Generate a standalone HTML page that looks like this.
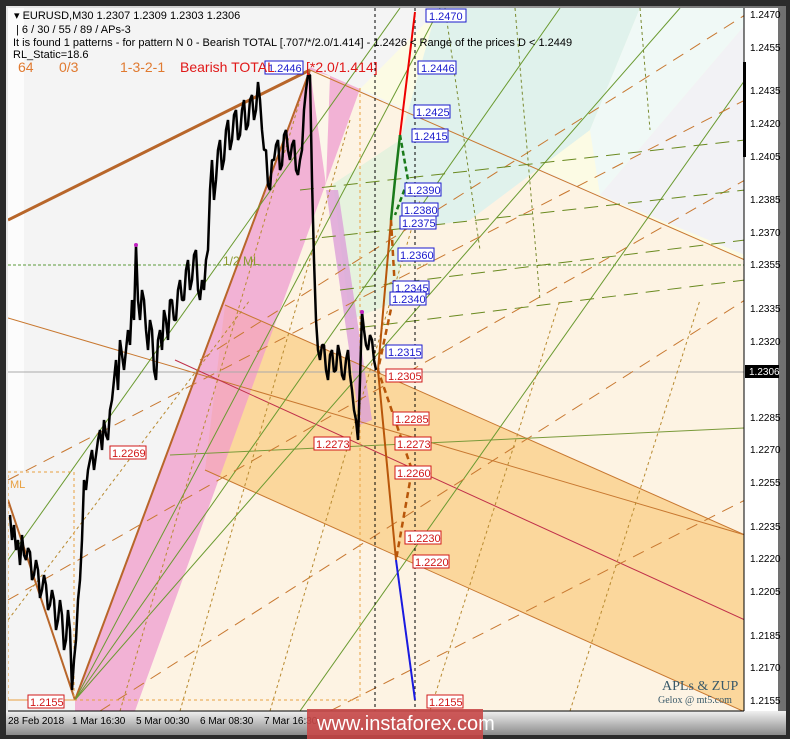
<!DOCTYPE html>
<html><head><meta charset="utf-8"><style>
body{margin:0;background:#2a2a2a;width:790px;height:739px;overflow:hidden;font-family:"Liberation Sans",sans-serif}
svg{position:absolute;left:0;top:0}
</style></head><body>
<svg width="790" height="739" viewBox="0 0 790 739" xmlns="http://www.w3.org/2000/svg" font-family="Liberation Sans, sans-serif">
<defs>
<linearGradient id="bot" x1="0" y1="0" x2="0" y2="1"><stop offset="0" stop-color="#f0f0f0"/><stop offset="1" stop-color="#8a8a8a"/></linearGradient>
<linearGradient id="rgt" x1="0" y1="0" x2="1" y2="0"><stop offset="0" stop-color="#e8e8e8"/><stop offset="1" stop-color="#707070"/></linearGradient>
<clipPath id="c"><rect x="8" y="8" width="736" height="703"/></clipPath>
</defs>
<rect width="790" height="739" fill="#2b2b2b"/>
<rect x="6" y="6" width="780" height="728" fill="url(#rgt)"/>
<rect x="6" y="711" width="780" height="24" fill="url(#bot)"/>
<rect x="744" y="8" width="34" height="703" fill="#fff"/>
<rect x="8" y="8" width="736" height="703" fill="#f4f4f4"/>
<rect x="8" y="8" width="16" height="462" fill="#fcfcfc"/>
<g clip-path="url(#c)">
<polygon points="310,70 745,260 745,711 135,711 360,89" fill="#fdf3e3"/>
<polygon points="360,89 440,8 745,8 745,260" fill="#fcfbe4"/>
<polygon points="437,8 640,8 590,130 470,220 400,230 400,140" fill="#e0f2ec"/>
<polygon points="640,8 745,8 745,25 600,195 590,130" fill="#f0f9f6"/>
<polygon points="745,25 745,255 600,195" fill="#f2f2f5"/>
<polygon points="333,184 400,140 400,300 350,320" fill="#e6f2de"/>
<polygon points="225,305 745,535 745,712 205,470" fill="#fbd79c"/>
<polygon points="75,700 310,67 360,89 135,711 75,711" fill="#f29ccb" opacity="0.75"/>
<polygon points="310,70 330,76 326,185" fill="#fcf6ea"/>
<polygon points="326,190 338,190 372,420 360,425" fill="#dca0d8" opacity="0.8"/>
<line x1="8" y1="372" x2="745" y2="372" stroke="#aaa" stroke-width="1"/>
<line x1="8" y1="265" x2="745" y2="265" stroke="#5a9a3a" stroke-dasharray="3,2"/>
<line x1="8" y1="318" x2="745" y2="535" stroke="#c87830"/>
<line x1="310" y1="70" x2="745" y2="260" stroke="#c87830"/>
<line x1="225" y1="305" x2="745" y2="535" stroke="#c87830"/>
<line x1="205" y1="470" x2="745" y2="712" stroke="#c87830"/>
<line x1="175" y1="360" x2="745" y2="620" stroke="#c0304a"/>
<line x1="170" y1="455" x2="745" y2="428" stroke="#7a9a3a"/>
<line x1="8" y1="220" x2="310" y2="70" stroke="#b8662a" stroke-width="3"/>
<line x1="75" y1="700" x2="310" y2="70" stroke="#b8662a" stroke-width="2"/>
<line x1="75" y1="700" x2="8" y2="500" stroke="#b8662a" stroke-width="2"/>
<g stroke="#6a9a30" stroke-width="1" fill="none">
<line x1="75" y1="700" x2="440" y2="8"/><line x1="75" y1="700" x2="560" y2="8"/>
<line x1="75" y1="700" x2="680" y2="8"/><line x1="300" y1="711" x2="745" y2="80"/>
<line x1="8" y1="560" x2="400" y2="8"/>
</g>
<g stroke="#c87830" stroke-dasharray="12,8" fill="none">
<line x1="8" y1="480" x2="745" y2="100"/><line x1="8" y1="600" x2="745" y2="180"/>
<line x1="100" y1="711" x2="745" y2="300"/><line x1="330" y1="711" x2="745" y2="500"/>
<line x1="200" y1="360" x2="745" y2="15"/>
</g>
<g stroke="#6a8a20" stroke-dasharray="14,8" fill="none">
<line x1="300" y1="190" x2="745" y2="140"/><line x1="300" y1="240" x2="745" y2="190"/>
<line x1="340" y1="290" x2="745" y2="240"/><line x1="340" y1="330" x2="745" y2="280"/>
</g>
<g stroke="#b88a30" stroke-dasharray="3,3" fill="none">
<line x1="120" y1="711" x2="300" y2="100"/><line x1="180" y1="711" x2="350" y2="120"/>
<line x1="270" y1="711" x2="420" y2="200"/><line x1="430" y1="711" x2="560" y2="300"/>
<line x1="570" y1="711" x2="700" y2="300"/><line x1="8" y1="620" x2="250" y2="300"/>
<line x1="8" y1="700" x2="360" y2="700" stroke="#e8a040"/>
</g>
<g stroke="#7a8a30" stroke-dasharray="3,3" fill="none">
<line x1="515" y1="8" x2="540" y2="300"/><line x1="640" y1="8" x2="650" y2="130"/>
<line x1="445" y1="8" x2="480" y2="250"/>
</g>
<line x1="375" y1="8" x2="375" y2="711" stroke="#000" stroke-dasharray="3,3"/>
<line x1="415" y1="8" x2="415" y2="711" stroke="#000" stroke-dasharray="3,3"/>
<rect x="8" y="472" width="66" height="228" fill="none" stroke="#e8a040" stroke-dasharray="3,3"/>
<line x1="360" y1="88" x2="360" y2="700" stroke="#e8a040" stroke-dasharray="3,3"/>
<polyline fill="none" stroke="#000" stroke-width="2.5" stroke-linejoin="bevel" points="10,515 12,540 14,525 16,550 18,540 20,565 22,535 24,555 26,560 28,548 30,552 32,580 34,575 36,560 38,570 40,598 42,590 44,575 46,585 48,610 50,605 52,590 54,600 56,630 58,620 60,600 62,615 64,650 66,640 68,610 70,630 72,690 74,660 76,640 78,600 80,580 82,540 84,480 86,490 88,470 90,460 92,450 94,470 96,455 98,440 100,430 102,450 104,420 106,435 108,440 110,410 112,400 114,380 116,360 118,390 120,340 122,355 124,370 126,350 128,330 130,345 132,300 134,320 136,245 138,300 140,320 142,290 144,300 146,330 148,350 150,320 152,330 154,370 156,380 158,340 160,330 162,350 164,310 166,320 168,340 170,300 172,300 174,320 176,320 178,290 180,280 182,300 184,300 186,270 188,260 190,290 192,280 194,255 196,250 198,290 200,300 202,280 204,290 206,260 208,250 210,190 212,160 214,200 216,180 218,150 220,140 222,170 224,160 226,130 228,120 230,150 232,140 234,115 236,110 238,140 240,135 242,110 244,100 246,130 248,125 250,100 252,95 254,120 256,110 258,82 260,100 262,130 264,150 266,150 268,185 270,190 272,160 274,160 276,145 278,140 280,170 282,165 284,135 286,130 288,150 290,160 292,145 294,140 296,170 298,175 300,160 302,150 304,110 306,90 308,75 310,75 312,180 314,260 316,320 318,350 320,360 322,345 324,345 326,370 328,380 330,355 332,350 334,372 336,370 338,345 340,355 342,375 344,380 346,360 348,350 350,375 352,390 354,410 356,420 358,440 360,380 362,312 364,330 366,345 368,350 370,335 372,340 374,360 376,370"/>
<circle cx="136" cy="245" r="2" fill="#c020c0"/><circle cx="362" cy="312" r="2" fill="#c020c0"/>
<line x1="415" y1="12" x2="400" y2="135" stroke="#e00" stroke-width="2"/>
<polyline fill="none" stroke="#1a7a1a" stroke-width="2.5" points="400,135 395,180 391,220"/>
<polyline fill="none" stroke="#1a7a1a" stroke-width="2.5" stroke-dasharray="5,3" points="400,135 408,180 395,215"/>
<polyline fill="none" stroke="#b8560a" stroke-width="2" points="391,220 378,370 396,560"/>
<polyline fill="none" stroke="#b8560a" stroke-width="2.5" stroke-dasharray="6,4" points="391,220 395,290 378,370 412,470 396,560"/>
<line x1="396" y1="560" x2="415" y2="700" stroke="#1a1ae0" stroke-width="2"/>
</g>
<g font-size="11" text-anchor="start">
<g fill="#fff" stroke="#1a1acc">
<rect x="426" y="9" width="40" height="13"/><rect x="418" y="61" width="38" height="13"/>
<rect x="414" y="105" width="36" height="13"/><rect x="412" y="129" width="36" height="13"/>
<rect x="405" y="183" width="36" height="13"/><rect x="402" y="203" width="36" height="13"/>
<rect x="400" y="216" width="36" height="13"/><rect x="398" y="248" width="36" height="13"/>
<rect x="393" y="281" width="36" height="13"/><rect x="390" y="292" width="36" height="13"/>
<rect x="386" y="345" width="36" height="13"/><rect x="265" y="61" width="38" height="13"/>
</g>
<g fill="#1a1acc">
<text x="429" y="20">1.2470</text><text x="421" y="72">1.2446</text><text x="416" y="116">1.2425</text>
<text x="414" y="140">1.2415</text><text x="407" y="194">1.2390</text><text x="404" y="214">1.2380</text>
<text x="402" y="227">1.2375</text><text x="400" y="259">1.2360</text><text x="395" y="292">1.2345</text>
<text x="392" y="303">1.2340</text><text x="388" y="356">1.2315</text><text x="268" y="72">1.2446</text>
</g>
<g fill="#fff" stroke="#d01818">
<rect x="386" y="369" width="36" height="13"/><rect x="393" y="412" width="36" height="13"/>
<rect x="395" y="437" width="36" height="13"/><rect x="395" y="466" width="36" height="13"/>
<rect x="405" y="531" width="36" height="13"/><rect x="413" y="555" width="36" height="13"/>
<rect x="427" y="695" width="36" height="13"/><rect x="28" y="695" width="36" height="13"/>
<rect x="110" y="446" width="36" height="13"/><rect x="314" y="437" width="36" height="13"/>
</g>
<g fill="#d01818">
<text x="388" y="380">1.2305</text><text x="395" y="423">1.2285</text><text x="397" y="448">1.2273</text>
<text x="397" y="477">1.2260</text><text x="407" y="542">1.2230</text><text x="415" y="566">1.2220</text>
<text x="429" y="706">1.2155</text><text x="30" y="706">1.2155</text><text x="112" y="457">1.2269</text>
<text x="316" y="448">1.2273</text>
</g>
</g>
<g font-size="11" fill="#000">
<text x="14" y="19">▾ EURUSD,M30  1.2307 1.2309 1.2303 1.2306</text>
<text x="16" y="33">| 6 / 30 / 55 / 89 / APs-3</text>
<text x="13" y="46">It is found 1 patterns  -  for pattern N 0 - Bearish TOTAL [.707/*/2.0/1.414] - 1.2426 &lt; Range of the prices D &lt; 1.2449</text>
<text x="13" y="58">RL_Static=18.6</text>
</g>
<g font-size="14">
<text x="18" y="72" fill="#e07a30">64</text><text x="59" y="72" fill="#e07a30">0/3</text>
<text x="120" y="72" fill="#e07a30">1-3-2-1</text><text x="180" y="72" fill="#e01818">Bearish TOTAL</text>
<text x="306" y="72" fill="#e01818">[*2.0/1.414]</text>
</g>
<text x="223" y="265" font-size="12" fill="#8a9a30">1/2 ML</text>
<text x="10" y="488" font-size="11" fill="#e8a040">ML</text>
<text x="662" y="690" font-size="14" fill="#3a5a6a" font-family="Liberation Serif, serif">APLs &amp; ZUP</text>
<text x="658" y="703" font-size="10" fill="#3a5a6a" font-family="Liberation Serif, serif">Gelox @ mt5.com</text>
<rect x="743" y="62" width="3" height="95" fill="#000"/>
<g font-size="10" fill="#000">
<text x="750" y="18">1.2470</text><text x="750" y="51">1.2455</text><text x="750" y="94">1.2435</text>
<text x="750" y="127">1.2420</text><text x="750" y="160">1.2405</text><text x="750" y="203">1.2385</text>
<text x="750" y="236">1.2370</text><text x="750" y="268">1.2355</text><text x="750" y="312">1.2335</text>
<text x="750" y="345">1.2320</text><text x="750" y="421">1.2285</text><text x="750" y="453">1.2270</text>
<text x="750" y="486">1.2255</text><text x="750" y="530">1.2235</text><text x="750" y="562">1.2220</text>
<text x="750" y="595">1.2205</text><text x="750" y="639">1.2185</text><text x="750" y="671">1.2170</text>
<text x="750" y="704">1.2155</text>
</g>
<rect x="745" y="365" width="34" height="13" fill="#000"/>
<text x="749" y="375" font-size="10" fill="#fff">1.2306</text>
<line x1="8" y1="711" x2="744" y2="711" stroke="#000"/>
<line x1="744" y1="8" x2="744" y2="711" stroke="#000"/>
<g font-size="10" fill="#000">
<text x="8" y="724">28 Feb 2018</text><text x="72" y="724">1 Mar 16:30</text>
<text x="136" y="724">5 Mar 00:30</text><text x="200" y="724">6 Mar 08:30</text><text x="264" y="724">7 Mar 16:30</text>
</g>
<rect x="307" y="709" width="176" height="30" fill="#c84848" opacity="0.9"/>
<text x="317" y="730" font-size="20" fill="#fff">www.instaforex.com</text>
</svg>
</body></html>
